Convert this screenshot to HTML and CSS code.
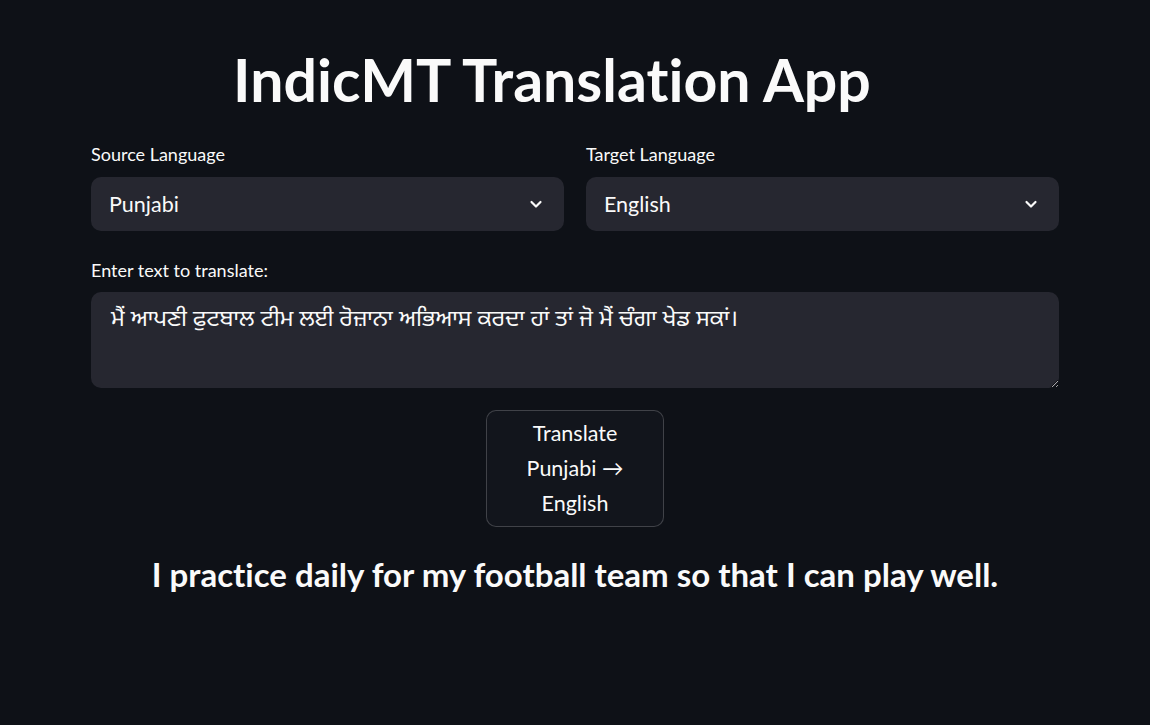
FILE: index.html
```html
<!DOCTYPE html>
<html lang="en">
<head>
<meta charset="utf-8">
<title>IndicMT Translation App</title>
<link rel="stylesheet" href="styles.css">
</head>
<body>
<main class="app">
  <h1 class="title">IndicMT Translation App</h1>
  <div class="lang-row">
    <div class="field">
      <label class="label">Source Language</label>
      <div class="select">
        <span class="select-value">Punjabi</span>
        <svg class="chevron" width="16" height="16" viewBox="0 0 16 16"><path d="M3.5 6 L8 10.5 L12.5 6" fill="none" stroke="#fafafa" stroke-width="2.2" stroke-linecap="round" stroke-linejoin="round"/></svg>
      </div>
    </div>
    <div class="field">
      <label class="label">Target Language</label>
      <div class="select">
        <span class="select-value">English</span>
        <svg class="chevron" width="16" height="16" viewBox="0 0 16 16"><path d="M3.5 6 L8 10.5 L12.5 6" fill="none" stroke="#fafafa" stroke-width="2.2" stroke-linecap="round" stroke-linejoin="round"/></svg>
      </div>
    </div>
  </div>
  <div class="field text-field">
    <label class="label">Enter text to translate:</label>
    <textarea class="textarea">ਮੈਂ ਆਪਣੀ ਫੁਟਬਾਲ ਟੀਮ ਲਈ ਰੋਜ਼ਾਨਾ ਅਭਿਆਸ ਕਰਦਾ ਹਾਂ ਤਾਂ ਜੋ ਮੈਂ ਚੰਗਾ ਖੇਡ ਸਕਾਂ।</textarea>
  </div>
  <div class="btn-row">
    <button class="btn">Translate Punjabi → English</button>
  </div>
  <p class="result">I practice daily for my football team so that I can play well.</p>
</main>
</body>
</html>
```

FILE: styles.css
```css
* { box-sizing: border-box; }
html, body {
  margin: 0;
  padding: 0;
  background: #0e1117;
  color: #fafafa;
  font-family: "Lato", "Noto Sans", "Noto Sans Gurmukhi", sans-serif;
  font-variant-ligatures: none;
}
.app {
  width: 968px;
  margin: 0 auto;
  padding-top: 42px;
}
.title {
  margin: 0;
  text-align: center;
  padding-right: 46px;
  font-size: 59px;
  line-height: 76px;
  font-weight: 700;
}
.lang-row {
  display: grid;
  grid-template-columns: 1fr 1fr;
  gap: 22px;
  margin-top: 25px;
}
.field {
  display: flex;
  flex-direction: column;
}
.label {
  font-size: 18px;
  line-height: 22px;
  margin-bottom: 12px;
}
.select {
  height: 54px;
  background: #262730;
  border-radius: 10px;
  display: flex;
  align-items: center;
  justify-content: space-between;
  padding: 0 20px 0 18px;
}
.select-value {
  font-size: 21.5px;
}
.chevron { display: block; }
.text-field { margin-top: 28px; }
.textarea {
  height: 96px;
  margin-top: -1px;
  background: #262730;
  border: none;
  border-radius: 10px;
  color: #fafafa;
  font-family: "Noto Sans Gurmukhi", "Lato", "Noto Sans", sans-serif;
  font-size: 23px;
  line-height: 32px;
  padding: 12px 20px;
  outline: none;
  resize: vertical;
}
.btn-row {
  display: flex;
  justify-content: center;
  margin-top: 22px;
}
.btn {
  width: 178px;
  padding: 5px 24px;
  background: #12151c;
  color: #fafafa;
  border: 1px solid rgba(250,250,250,0.2);
  border-radius: 10px;
  font-family: inherit;
  font-size: 21.5px;
  line-height: 35px;
}
.result {
  margin: 22px 0 0;
  text-align: center;
  font-size: 33px;
  line-height: 50px;
  font-weight: 700;
}
```
